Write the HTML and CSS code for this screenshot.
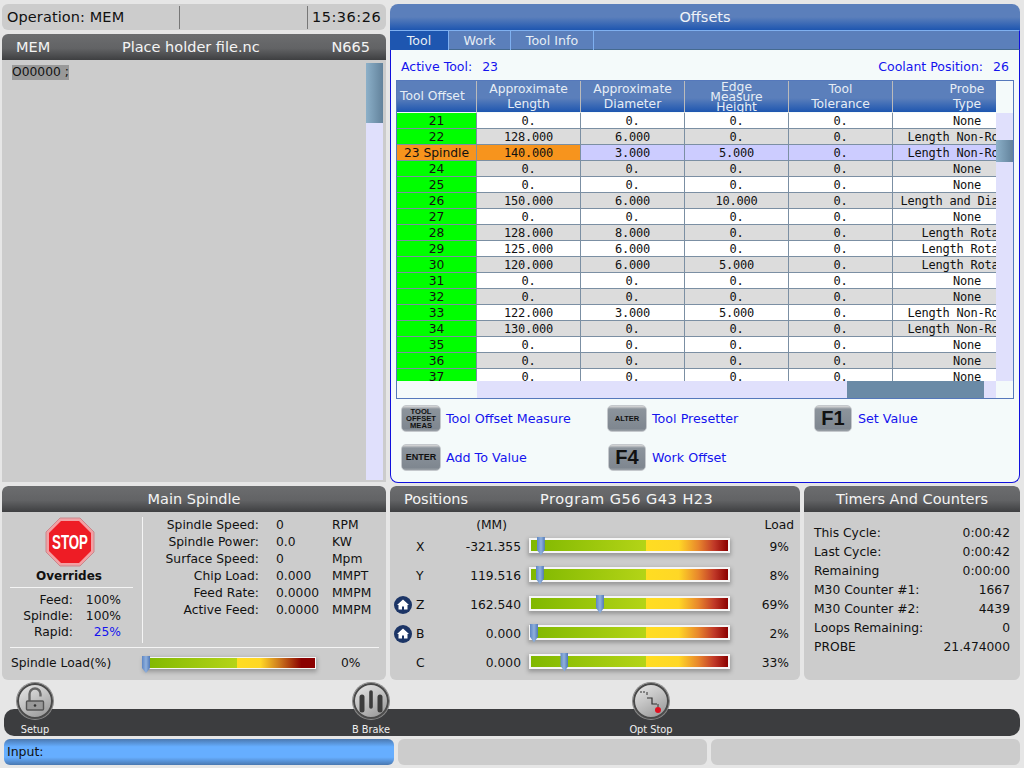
FILE: index.html
```html
<!DOCTYPE html>
<html lang="en">
<head>
    <meta charset="UTF-8">
    <meta name="viewport" content="width=device-width, initial-scale=1.0">
    <title>Offsets</title>
    <link rel="stylesheet" href="styles.css">
</head>
<body>
    <div class="top">
        <div class="left_col">
            <div class="status">
                <div class="status_op">Operation: MEM</div>
                <div class="status_mid"></div>
                <div class="status_time">15:36:26</div>
            </div>
            <div class="program">
                <div class="dark_head program_head">
                    <span>MEM</span>
                    <span>Place holder file.nc</span>
                    <span>N665</span>
                </div>
                <div class="program_body">
                    <div class="code"><span class="code_line">O00000 ;</span></div>
                    <div class="program_scroll"><div class="program_thumb"></div></div>
                </div>
            </div>
        </div>

        <div class="offsets">
            <div class="offsets_head">Offsets</div>
            <div class="tabs">
                <div class="tab tab_active">Tool</div>
                <div class="tab tab_work">Work</div>
                <div class="tab tab_info">Tool Info</div>
            </div>
            <div class="offsets_body">
                <div class="active_row">
                    <div><span class="active_label">Active Tool:</span>23</div>
                    <div><span class="active_label">Coolant Position:</span>26</div>
                </div>
                <div class="table_frame">
                    <table class="tool_table">
                        <thead>
                            <tr>
                                <th class="col_tool">Tool Offset</th>
                                <th>Approximate<br>Length</th>
                                <th>Approximate<br>Diameter</th>
                                <th class="th_tight">Edge<br>Measure<br>Height</th>
                                <th>Tool<br>Tolerance</th>
                                <th class="col_probe">Probe<br>Type</th>
                            </tr>
                        </thead>
                        <tbody>
                            <tr><td class="tool_num">21</td><td>0.</td><td>0.</td><td>0.</td><td>0.</td><td>None</td></tr>
                            <tr><td class="tool_num">22</td><td>128.000</td><td>6.000</td><td>0.</td><td>0.</td><td>Length Non-Rotary</td></tr>
                            <tr class="row_sel"><td class="tool_num tool_cur">23 Spindle</td><td class="tool_cur">140.000</td><td>3.000</td><td>5.000</td><td>0.</td><td>Length Non-Rotary</td></tr>
                            <tr><td class="tool_num">24</td><td>0.</td><td>0.</td><td>0.</td><td>0.</td><td>None</td></tr>
                            <tr><td class="tool_num">25</td><td>0.</td><td>0.</td><td>0.</td><td>0.</td><td>None</td></tr>
                            <tr><td class="tool_num">26</td><td>150.000</td><td>6.000</td><td>10.000</td><td>0.</td><td>Length and Diameter</td></tr>
                            <tr><td class="tool_num">27</td><td>0.</td><td>0.</td><td>0.</td><td>0.</td><td>None</td></tr>
                            <tr><td class="tool_num">28</td><td>128.000</td><td>8.000</td><td>0.</td><td>0.</td><td>Length Rotary</td></tr>
                            <tr><td class="tool_num">29</td><td>125.000</td><td>6.000</td><td>0.</td><td>0.</td><td>Length Rotary</td></tr>
                            <tr><td class="tool_num">30</td><td>120.000</td><td>6.000</td><td>5.000</td><td>0.</td><td>Length Rotary</td></tr>
                            <tr><td class="tool_num">31</td><td>0.</td><td>0.</td><td>0.</td><td>0.</td><td>None</td></tr>
                            <tr><td class="tool_num">32</td><td>0.</td><td>0.</td><td>0.</td><td>0.</td><td>None</td></tr>
                            <tr><td class="tool_num">33</td><td>122.000</td><td>3.000</td><td>5.000</td><td>0.</td><td>Length Non-Rotary</td></tr>
                            <tr><td class="tool_num">34</td><td>130.000</td><td>0.</td><td>0.</td><td>0.</td><td>Length Non-Rotary</td></tr>
                            <tr><td class="tool_num">35</td><td>0.</td><td>0.</td><td>0.</td><td>0.</td><td>None</td></tr>
                            <tr><td class="tool_num">36</td><td>0.</td><td>0.</td><td>0.</td><td>0.</td><td>None</td></tr>
                            <tr><td class="tool_num">37</td><td>0.</td><td>0.</td><td>0.</td><td>0.</td><td>None</td></tr>
                        </tbody>
                    </table>
                    <div class="v_scroll"><div class="v_thumb"></div></div>
                    <div class="h_scroll"><div class="h_thumb"></div></div>
                </div>
                <div class="keys">
                    <div class="key_item"><div class="key key_tool">TOOL<br>OFFSET<br>MEAS</div><span>Tool Offset Measure</span></div>
                    <div class="key_item"><div class="key key_alter">ALTER</div><span>Tool Presetter</span></div>
                    <div class="key_item"><div class="key key_f">F1</div><span>Set Value</span></div>
                    <div class="key_item"><div class="key key_enter">ENTER</div><span>Add To Value</span></div>
                    <div class="key_item"><div class="key key_f key_f4">F4</div><span>Work Offset</span></div>
                </div>
            </div>
        </div>
    </div>

    <div class="mid">
        <div class="panel spindle">
            <div class="dark_head head_center">Main Spindle</div>
            <div class="spindle_top">
                <div class="overrides">
                    <svg class="stop_sign" width="50" height="50" viewBox="0 0 50 50">
                        <polygon points="15,1 35,1 49,15 49,35 35,49 15,49 1,35 1,15" fill="#f2a0a4" stroke="#c8888c"/>
                        <polygon points="16,4 34,4 46,16 46,34 34,46 16,46 4,34 4,16" fill="#ee1c25"/>
                        <text x="25" y="32" text-anchor="middle" class="stop_text" textLength="36" lengthAdjust="spacingAndGlyphs">STOP</text>
                    </svg>
                    <div class="overrides_title">Overrides</div>
                    <div class="overrides_rows">
                        <div class="ov_row"><span>Feed:</span><span>100%</span></div>
                        <div class="ov_row"><span>Spindle:</span><span>100%</span></div>
                        <div class="ov_row"><span>Rapid:</span><span class="ov_blue">25%</span></div>
                    </div>
                </div>
                <div class="spindle_stats">
                    <div class="stat_label">Spindle Speed:</div><div>0</div><div>RPM</div>
                    <div class="stat_label">Spindle Power:</div><div>0.0</div><div>KW</div>
                    <div class="stat_label">Surface Speed:</div><div>0</div><div>Mpm</div>
                    <div class="stat_label">Chip Load:</div><div>0.000</div><div>MMPT</div>
                    <div class="stat_label">Feed Rate:</div><div>0.0000</div><div>MMPM</div>
                    <div class="stat_label">Active Feed:</div><div>0.0000</div><div>MMPM</div>
                </div>
            </div>
            <div class="spindle_load">
                <div class="load_name">Spindle Load(%)</div>
                <div class="gauge gauge_small"><div class="marker" style="left: 0%"></div></div>
                <div class="load_pct">0%</div>
            </div>
        </div>

        <div class="panel positions">
            <div class="dark_head positions_head"><span>Positions</span><span class="pos_title">Program G56 G43 H23</span></div>
            <div class="pos_grid">
                <div></div><div></div><div class="pos_unit">(MM)</div><div></div><div class="pos_load_head">Load</div>

                <div></div><div class="axis">X</div><div class="pos_val">-321.355</div>
                <div class="gauge"><div class="marker" style="left: 5%"></div></div><div class="pos_pct">9%</div>

                <div></div><div class="axis">Y</div><div class="pos_val">119.516</div>
                <div class="gauge"><div class="marker" style="left: 4.5%"></div></div><div class="pos_pct">8%</div>

                <div class="home"><svg width="18" height="18" viewBox="0 0 18 18"><circle cx="9" cy="9" r="9" fill="#1c3566"/><path d="M9 3.5 L15 9 H13.5 V13.5 H10 V10.5 H8 V13.5 H4.5 V9 H3 Z" fill="#fff"/></svg></div><div class="axis">Z</div><div class="pos_val">162.540</div>
                <div class="gauge"><div class="marker" style="left: 35%"></div></div><div class="pos_pct">69%</div>

                <div class="home"><svg width="18" height="18" viewBox="0 0 18 18"><circle cx="9" cy="9" r="9" fill="#1c3566"/><path d="M9 3.5 L15 9 H13.5 V13.5 H10 V10.5 H8 V13.5 H4.5 V9 H3 Z" fill="#fff"/></svg></div><div class="axis">B</div><div class="pos_val">0.000</div>
                <div class="gauge"><div class="marker" style="left: 1.5%"></div></div><div class="pos_pct">2%</div>

                <div></div><div class="axis">C</div><div class="pos_val">0.000</div>
                <div class="gauge"><div class="marker" style="left: 17%"></div></div><div class="pos_pct">33%</div>
            </div>
        </div>

        <div class="panel timers">
            <div class="dark_head head_center">Timers And Counters</div>
            <div class="timer_rows">
                <div class="timer_row"><span>This Cycle:</span><span>0:00:42</span></div>
                <div class="timer_row"><span>Last Cycle:</span><span>0:00:42</span></div>
                <div class="timer_row"><span>Remaining</span><span>0:00:00</span></div>
                <div class="timer_row"><span>M30 Counter #1:</span><span>1667</span></div>
                <div class="timer_row"><span>M30 Counter #2:</span><span>4439</span></div>
                <div class="timer_row"><span>Loops Remaining:</span><span>0</span></div>
                <div class="timer_row"><span>PROBE</span><span>21.474000</span></div>
            </div>
        </div>
    </div>

    <div class="toolbar">
        <div class="tool tool_setup">
            <div class="tool_btn">
                <svg width="36" height="36" viewBox="0 0 36 36">
                    <path d="M12.5 18 V11 a5.5 5.5 0 0 1 11 0 V13.5" fill="none" stroke="#666" stroke-width="2.4"/>
                    <rect x="9.5" y="18" width="17" height="9" rx="1" fill="#999" stroke="#555" stroke-width="1.4"/>
                    <circle cx="18" cy="22.5" r="1.3" fill="#333"/>
                </svg>
            </div>
            <div class="tool_label">Setup</div>
        </div>
        <div class="tool tool_brake">
            <div class="tool_btn">
                <svg width="36" height="36" viewBox="0 0 36 36">
                    <path d="M9 14 V27" stroke="#3c3c3c" stroke-width="5" stroke-linecap="round"/>
                    <path d="M18 9 V24" stroke="#3c3c3c" stroke-width="3.6" stroke-linecap="round"/>
                    <path d="M27 14 V27" stroke="#3c3c3c" stroke-width="5" stroke-linecap="round"/>
                </svg>
            </div>
            <div class="tool_label">B Brake</div>
        </div>
        <div class="tool tool_opt">
            <div class="tool_btn">
                <svg width="36" height="36" viewBox="0 0 36 36">
                    <path d="M7 9 H12" stroke="#333" stroke-width="1" stroke-dasharray="2 1" fill="none"/>
                    <path d="M14 9 V12" stroke="#333" stroke-width="1" fill="none"/>
                    <path d="M14 15 H19 V21 H24" stroke="#333" stroke-width="1.2" fill="none"/>
                    <path d="M25 21 V24" stroke="#333" stroke-width="1" fill="none"/>
                    <circle cx="25" cy="27" r="3" fill="#e01020"/>
                </svg>
            </div>
            <div class="tool_label">Opt Stop</div>
        </div>
    </div>

    <div class="input_row">
        <div class="input_box">Input:</div>
        <div class="msg_box"></div>
        <div class="msg_box"></div>
    </div>
</body>
</html>
```

FILE: styles.css
```css
body{
    margin: 0;
    width: 1024px;
    height: 768px;
    overflow: hidden;
    background: #e6e6e6;
    font-family: "DejaVu Sans", sans-serif;
    font-size: 12.3px;
    color: #111;
}

/* top area */
.top{
    display: flex;
    gap: 4px;
    height: 478px;
    margin: 4px 4px 0 2px;
}
.left_col{
    flex: none;
    width: 384px;
    display: flex;
    flex-direction: column;
    gap: 4px;
}
.status{
    display: flex;
    height: 26px;
    line-height: 26px;
    background: #cccccc;
    border-radius: 6px;
    font-size: 14.5px;
}
.status_op{
    width: 172px;
    padding-left: 5px;
    letter-spacing: 0.1px;
}
.status_mid{
    width: 127px;
    margin: 2px 0 1px;
    border-left: 1px solid #777;
    border-right: 1px solid #777;
}
.status_time{
    padding-left: 4px;
    letter-spacing: 0.5px;
}
.dark_head{
    height: 26px;
    line-height: 26px;
    font-size: 14.5px;
    color: #f4f4f4;
    background: linear-gradient(#6c6d6f 0%, #626365 55%, #3e3f41 100%);
    border-radius: 6px 6px 0 0;
}
.head_center{
    text-align: center;
}
.program{
    flex: 1;
    display: flex;
    flex-direction: column;
}
.program_head{
    display: flex;
    justify-content: space-between;
    padding: 0 16px 0 14px;
}
.program_body{
    flex: 1;
    display: flex;
    justify-content: space-between;
    background: #cccccc;
    padding: 3px 3px 2px 10px;
}
.code{
    padding-top: 2px;
    line-height: 15px;
}
.code_line{
    display: inline-block;
    background: #999999;
}
.program_scroll{
    width: 17px;
    background: #e0e0fc;
}
.program_thumb{
    height: 60px;
    background: linear-gradient(90deg, #8cb0c9, #62829b);
}

/* offsets panel */
.offsets{
    flex: none;
    width: 630px;
    display: flex;
    flex-direction: column;
}
.offsets_head{
    height: 26px;
    line-height: 26px;
    text-align: center;
    font-size: 14.5px;
    color: #eef2f8;
    background: linear-gradient(#5b7fbb 0%, #5b7fbb 50%, #1e56b0 100%);
    border-radius: 8px 8px 0 0;
}
.tabs{
    display: flex;
    height: 20px;
    background: #5b7fbb;
    border-top: 1px solid #7fb0f0;
    border-bottom: 1px solid #456a90;
    box-sizing: border-box;
    border-right: 1px solid #1010dd;
}
.tab{
    height: 19px;
    line-height: 20px;
    text-align: center;
    color: #e6edf5;
    font-size: 12.6px;
    border-right: 1px solid #7fb0f0;
    box-sizing: border-box;
}
.tab_active{
    width: 59px;
    background: #1e56b0;
    margin-bottom: -1px;
    height: 20px;
}
.tab_work{
    width: 62px;
}
.tab_info{
    width: 83px;
}
.offsets_body{
    flex: 1;
    background: #f4fafa;
    border: 1px solid #1010dd;
    border-top: 0;
    border-radius: 0 0 8px 8px;
    padding: 0 5px;
}
.active_row{
    display: flex;
    justify-content: space-between;
    height: 30px;
    line-height: 34px;
    color: #1414ee;
    font-size: 12.5px;
    padding: 0 5px 0 5px;
}
.active_label{
    margin-right: 10px;
}
.table_frame{
    position: relative;
    height: 317px;
    overflow: hidden;
    border: 1px solid #5578bb;
}
.tool_table{
    border-collapse: separate;
    border-spacing: 0;
    table-layout: fixed;
    width: 644px;
}
.tool_table th{
    box-sizing: border-box;
    width: 104px;
    height: 32px;
    padding: 0;
    font-weight: normal;
    font-size: 12.3px;
    line-height: 15px;
    color: #e6edf5;
    background: linear-gradient(#5b7fbb 0%, #5b7fbb 55%, #1e56b0 100%);
    border-left: 1px solid #bbbbbb;
    border-bottom: 1px solid #f4fafa;
    overflow: hidden;
}
.tool_table th.col_tool{
    width: 79px;
    border-left: 0;
    text-align: left;
    padding-left: 3px;
}
.tool_table th.col_probe{
    width: 149px;
}
.tool_table th.th_tight{
    line-height: 10px;
}
.tool_table td{
    box-sizing: border-box;
    height: 16px;
    padding: 1px 0 0;
    text-align: center;
    font-family: "DejaVu Sans Mono", monospace;
    font-size: 12px;
    letter-spacing: -0.22px;
    line-height: 14px;
    white-space: nowrap;
    overflow: hidden;
    color: #111;
    background: #ffffff;
    border-left: 1px solid #7b8fa3;
    border-bottom: 1px solid #7b8fa3;
}
.tool_table tr:nth-child(even) td{
    background: #dcdcdc;
}
.tool_table tr.row_sel td{
    background: #ccccff;
}
.tool_table td.tool_num,
.tool_table tr:nth-child(even) td.tool_num{
    font-family: "DejaVu Sans", sans-serif;
    font-size: 12.3px;
    letter-spacing: 0;
    background: #00ff00;
    border-left: 0;
}
.tool_table tr.row_sel td.tool_cur{
    background: #f7941d;
}
.v_scroll{
    position: absolute;
    left: 599px;
    top: 32px;
    width: 17px;
    height: 268px;
    background: #e0e0fc;
}
.v_thumb{
    margin-top: 27px;
    height: 22px;
    background: linear-gradient(90deg, #8cb0c9, #62829b);
}
.v_scroll::before{
    content: "";
    position: absolute;
    left: 0;
    top: -32px;
    width: 17px;
    height: 32px;
    background: #f4fafa;
}
.h_scroll{
    position: absolute;
    left: 0;
    top: 300px;
    width: 616px;
    height: 17px;
    background: #f4fafa;
}
.h_scroll::before{
    content: "";
    position: absolute;
    left: 80px;
    top: 0;
    width: 519px;
    height: 17px;
    background: #e0e0fc;
}
.h_thumb{
    position: absolute;
    left: 450px;
    top: 0;
    width: 137px;
    height: 17px;
    background: #6a8aa6;
}
.keys{
    display: grid;
    grid-template-columns: 206px 207px 190px;
    grid-auto-rows: 39px;
    padding: 5px 0 0 5px;
}
.key_item{
    display: flex;
    align-items: center;
    gap: 5px;
    height: 28px;
    color: #1414ee;
    font-size: 12.7px;
}
.key{
    width: 40px;
    height: 27px;
    box-sizing: border-box;
    display: flex;
    align-items: center;
    justify-content: center;
    text-align: center;
    color: #111;
    font-family: "Liberation Sans", sans-serif;
    font-weight: bold;
    background: linear-gradient(#dcdcdc 0, #8c949c 3px, #7f8790 90%, #9aa0a6 100%);
    border: 1px solid #c4c8cc;
    border-radius: 5px;
}
.key_tool{
    font-size: 7.6px;
    line-height: 7px;
}
.key_alter{
    font-size: 7.5px;
}
.key_enter{
    font-size: 9px;
}
.key_f{
    width: 38px;
    margin-right: 1px;
    font-size: 20px;
}
.key_f4{
    margin-left: 1px;
}

/* middle panels */
.mid{
    display: flex;
    gap: 4px;
    height: 194px;
    margin: 4px 4px 0 2px;
}
.panel{
    background: #cccccc;
    border-radius: 6px;
    overflow: hidden;
}
.spindle{
    width: 384px;
}
.positions{
    width: 410px;
}
.timers{
    width: 216px;
}
.spindle_top{
    display: flex;
    height: 126px;
    margin: 5px 0 0 8px;
}
.overrides{
    width: 123px;
    margin-right: 9px;
    text-align: center;
}
.stop_sign{
    display: block;
    margin-left: 35px;
}
.stop_text{
    font-family: "Liberation Sans Narrow", "Liberation Sans", sans-serif;
    font-size: 20px;
    font-weight: bold;
    fill: #fff;
}
.overrides_title{
    font-weight: bold;
    font-size: 12px;
    height: 19px;
    line-height: 19px;
    padding: 0 5px 1px 0;
    border-bottom: 1px solid #f4f4f4;
}
.overrides_rows{
    margin-top: 4px;
}
.ov_row{
    display: grid;
    grid-template-columns: 63px 48px;
    height: 16px;
    line-height: 16px;
    text-align: right;
}
.ov_blue{
    color: #1414ee;
}
.spindle_stats{
    display: grid;
    grid-template-columns: 107px 73px 50px;
    grid-auto-rows: 17px;
    line-height: 17px;
    border-left: 1px solid #f4f4f4;
    padding-left: 9px;
    align-content: start;
}
.stat_label{
    text-align: right;
}
.stat_label + div{
    padding-left: 17px;
}
.spindle_load{
    display: flex;
    align-items: center;
    height: 30px;
    margin: 4px 7px 0 8px;
    border-top: 1px solid #f4f4f4;
}
.load_name{
    flex: none;
    width: 131px;
    padding-left: 1px;
    box-sizing: border-box;
}
.load_pct{
    margin-left: 25px;
}

/* gauges */
.gauge{
    position: relative;
    width: 201px;
    height: 15px;
    box-sizing: border-box;
    border: 2px solid #f6f6f6;
    background: linear-gradient(90deg, #80b800 0%, #b4d417 58.4%, #ffdd22 58.5%, #ffd726 75%, #e8862c 85%, #c03828 93%, #8b0000 100%);
    box-shadow: 0 2px 4px 1px rgba(0, 0, 0, 0.25);
}
.gauge_small{
    flex: none;
    width: 172px;
    height: 12px;
    margin-left: 3px;
    border-width: 1px;
    background: linear-gradient(90deg, #80b800 0%, #b4d417 53.9%, #ffdd22 54%, #ffd726 68%, #c8701c 80%, #8b0000 92%, #8b0000 100%);
}
.marker{
    position: absolute;
    top: -3px;
    width: 8px;
    height: 19px;
    margin-left: -4px;
    background: linear-gradient(90deg, #5d86c4, #8fb0dc 50%, #4f78b8);
    clip-path: polygon(0 0, 100% 0, 100% 70%, 50% 100%, 0 70%);
}
.gauge_small .marker{
    top: -2px;
    height: 17px;
    margin-left: -3px;
}

/* positions */
.positions_head{
    position: relative;
    padding-left: 14px;
}
.pos_title{
    position: absolute;
    left: 150px;
    letter-spacing: 0.5px;
}
.pos_grid{
    display: grid;
    grid-template-columns: 22px 20px 87px 201px 58px;
    grid-template-rows: 15px repeat(5, 29px);
    align-items: center;
    padding: 5px 0 0 2px;
}
.pos_grid .gauge{
    margin: -3px 0 0 8px;
}
.pos_unit{
    text-align: right;
    padding-right: 14px;
}
.pos_load_head{
    text-align: right;
    margin-right: -14px;
}
.axis{
    padding-left: 2px;
}
.pos_val{
    text-align: right;
}
.pos_pct{
    text-align: right;
    margin-right: -9px;
}
.home{
    height: 18px;
    padding-left: 2px;
}

/* timers */
.timer_rows{
    padding: 12px 10px 0 10px;
}
.timer_row{
    display: flex;
    justify-content: space-between;
    height: 19px;
    line-height: 19px;
}

/* tool bar */
.toolbar{
    display: flex;
    height: 27px;
    margin: 29px 4px 0 4px;
    background: #3c3d3f;
    border-radius: 10px;
    color: #f0f0f0;
    font-size: 9.8px;
}
.tool{
    width: 62px;
    margin-top: -26px;
    display: flex;
    flex-direction: column;
    align-items: center;
}
.tool_brake{
    margin-left: 274px;
}
.tool_opt{
    margin-left: 218px;
}
.tool_btn{
    width: 36px;
    height: 36px;
    border-radius: 50%;
    box-sizing: border-box;
    background: linear-gradient(150deg, #ececec 0%, #c4c4c4 45%, #8e8e8e 100%);
    box-shadow: inset 0 0 0 2px #4a4a4a, 0 0 0 1px #8a8a8a;
}
.tool_btn svg{
    display: block;
}
.tool_label{
    margin-top: 5px;
    line-height: 12px;
    white-space: nowrap;
}

/* input line */
.input_row{
    display: flex;
    gap: 4px;
    height: 26px;
    margin: 3px 4px 0 4px;
}
.input_box{
    width: 390px;
    line-height: 26px;
    padding-left: 3px;
    box-sizing: border-box;
    font-size: 12.5px;
    border-radius: 6px;
    background: linear-gradient(#4a78b0 0%, #66aeff 30%, #66aeff 70%, #4a78b0 100%);
}
.msg_box{
    flex: 1;
    background: #cccccc;
    border-radius: 6px;
}
```
